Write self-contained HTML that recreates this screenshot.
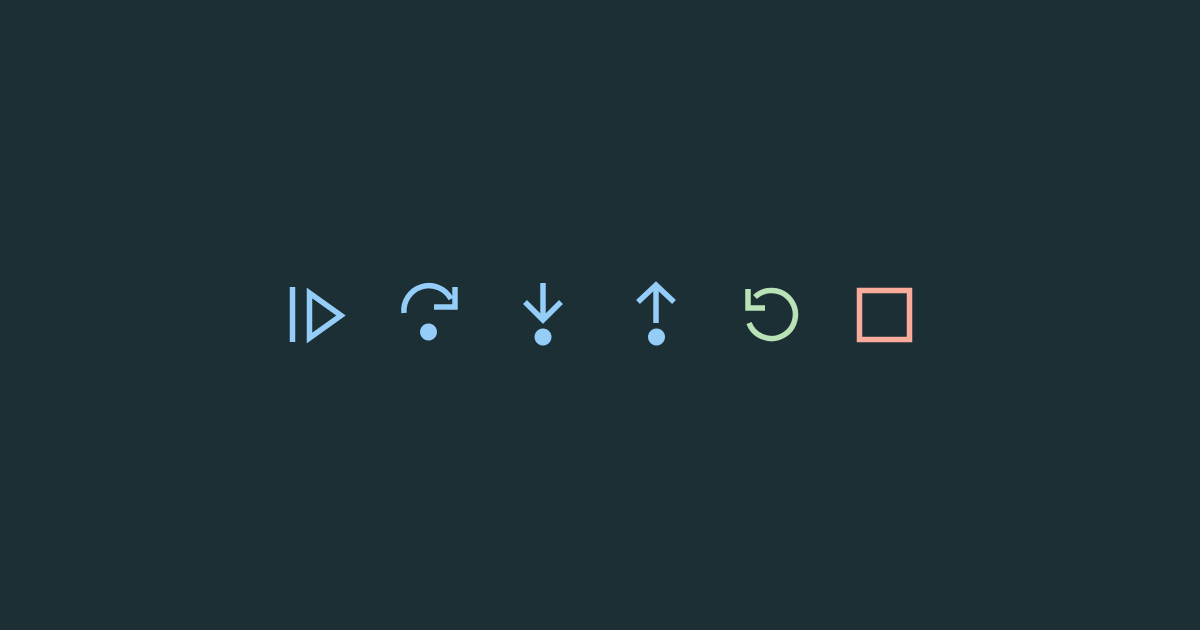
<!DOCTYPE html>
<html><head><style>
html,body{margin:0;padding:0;background:#1c2f35;width:1200px;height:630px;overflow:hidden}
</style></head><body>
<svg width="1200" height="630" style="position:absolute;left:0;top:0">
<g fill="none" stroke="#94cdf8" stroke-width="5.5">
<line x1="292.5" y1="287" x2="292.5" y2="342"/>
<path d="M309.5 293 L341 315.5 L309.5 338 Z" stroke-linejoin="miter"/>
<path d="M404 313 A25 25 0 0 1 451 299"/>
<path d="M455 287 V307 H434"/>
<line x1="543" y1="283" x2="543" y2="321"/>
<path d="M525 302 L543 320 L561 302"/>
<line x1="656" y1="287" x2="656" y2="323"/>
<path d="M638 302 L656 285 L674 302"/>
</g>
<g fill="#94cdf8">
<circle cx="428.5" cy="332" r="8.5"/>
<circle cx="543" cy="337" r="8.5"/>
<circle cx="656.5" cy="337" r="8.5"/>
</g>
<g fill="none" stroke="#b9e2b6" stroke-width="5.5">
<path d="M755 297 A24 24 0 1 1 749 323"/>
<path d="M748 289 V308 H765"/>
</g>
<rect x="859.5" y="290.5" width="50" height="49" fill="none" stroke="#f9ac9b" stroke-width="5.5"/>
</svg>
</body></html>
